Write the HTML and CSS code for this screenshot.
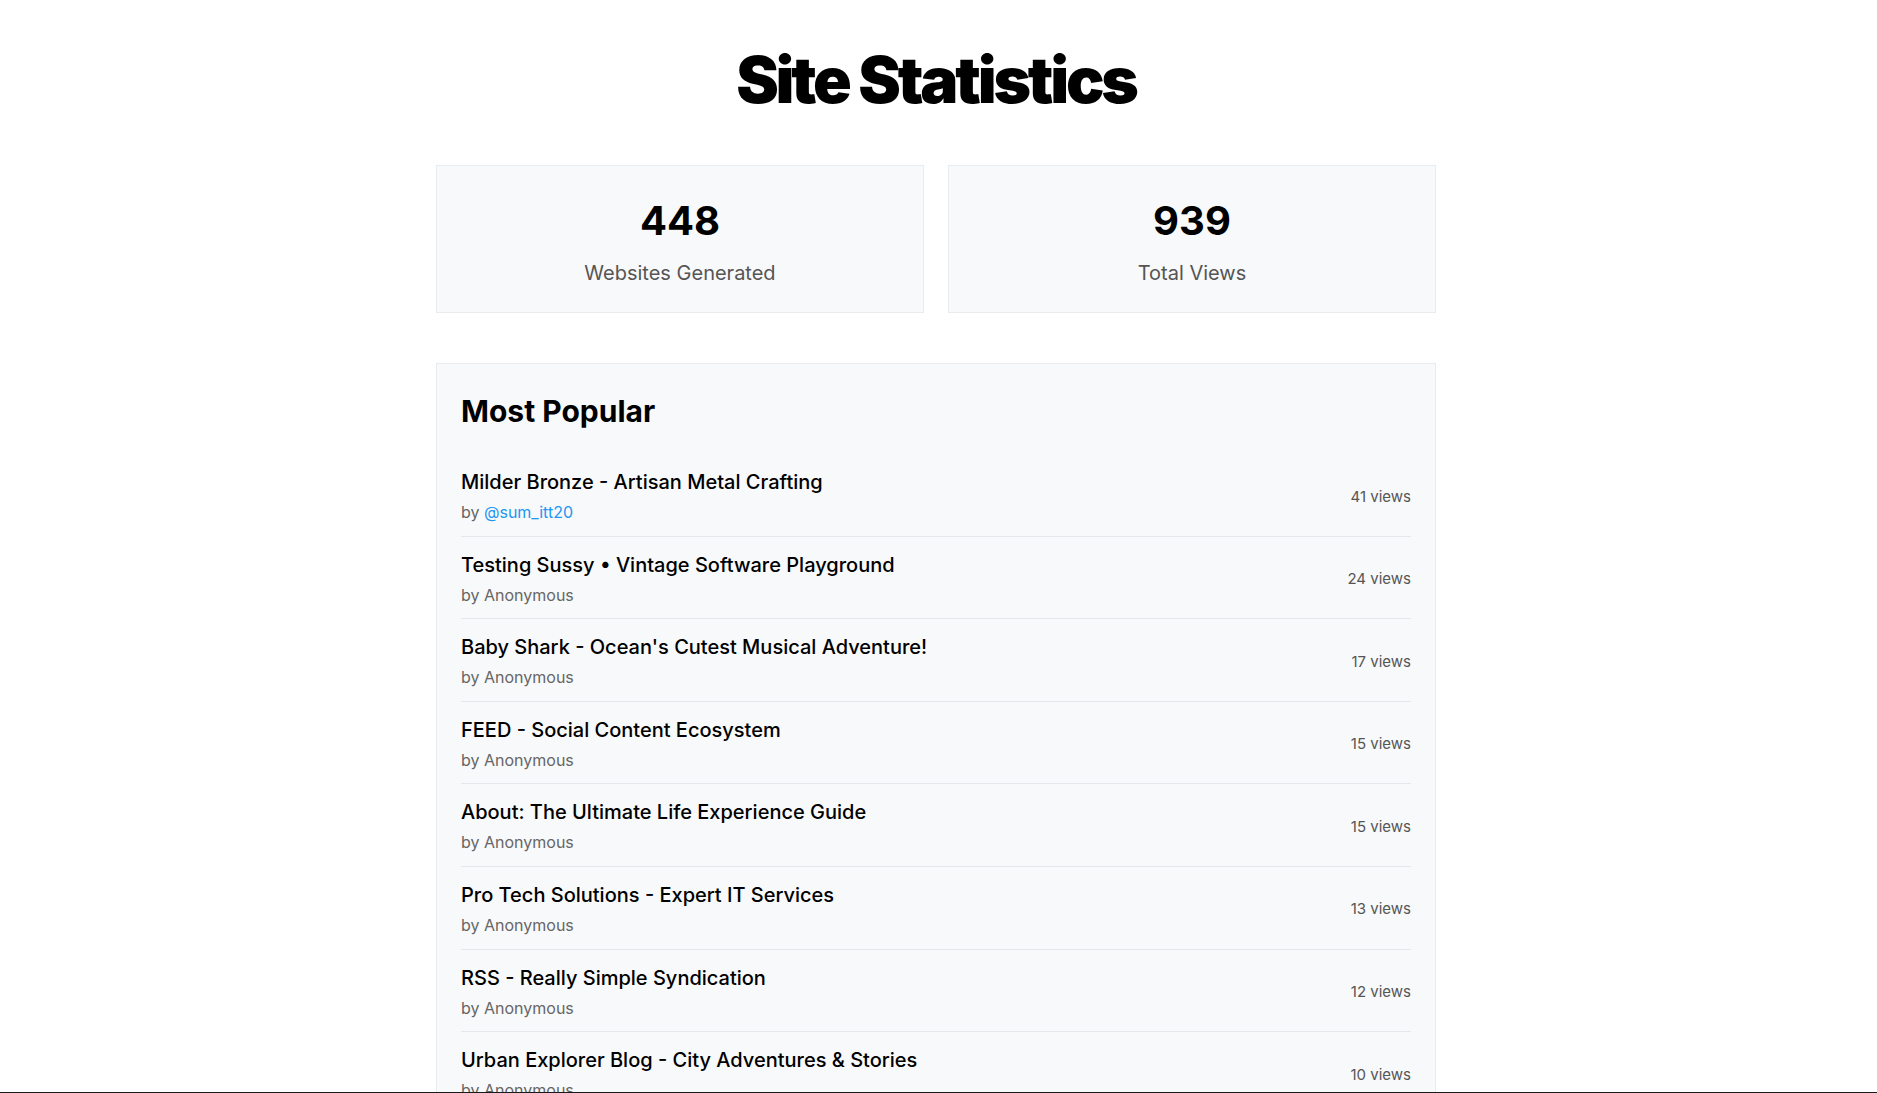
FILE: index.html
```html
<!DOCTYPE html>
<html lang="en">
<head>
<meta charset="utf-8">
<title>Site Statistics</title>
<link rel="stylesheet" href="styles.css">
</head>
<body>
<main class="page">
  <h1 class="page-title">Site Statistics</h1>

  <section class="stats">
    <div class="stat-card">
      <div class="stat-number">448</div>
      <div class="stat-label">Websites Generated</div>
    </div>
    <div class="stat-card">
      <div class="stat-number">939</div>
      <div class="stat-label">Total Views</div>
    </div>
  </section>

  <section class="popular">
    <h2 class="popular-title">Most Popular</h2>
    <ul class="site-list">
      <li class="site-row">
        <div class="site-info">
          <div class="site-name">Milder Bronze - Artisan Metal Crafting</div>
          <div class="site-author">by <a class="author-link" href="#">@sum_itt20</a></div>
        </div>
        <div class="site-views">41 views</div>
      </li>
      <li class="site-row">
        <div class="site-info">
          <div class="site-name">Testing Sussy • Vintage Software Playground</div>
          <div class="site-author">by Anonymous</div>
        </div>
        <div class="site-views">24 views</div>
      </li>
      <li class="site-row">
        <div class="site-info">
          <div class="site-name">Baby Shark - Ocean's Cutest Musical Adventure!</div>
          <div class="site-author">by Anonymous</div>
        </div>
        <div class="site-views">17 views</div>
      </li>
      <li class="site-row">
        <div class="site-info">
          <div class="site-name">FEED - Social Content Ecosystem</div>
          <div class="site-author">by Anonymous</div>
        </div>
        <div class="site-views">15 views</div>
      </li>
      <li class="site-row">
        <div class="site-info">
          <div class="site-name">About: The Ultimate Life Experience Guide</div>
          <div class="site-author">by Anonymous</div>
        </div>
        <div class="site-views">15 views</div>
      </li>
      <li class="site-row">
        <div class="site-info">
          <div class="site-name">Pro Tech Solutions - Expert IT Services</div>
          <div class="site-author">by Anonymous</div>
        </div>
        <div class="site-views">13 views</div>
      </li>
      <li class="site-row">
        <div class="site-info">
          <div class="site-name">RSS - Really Simple Syndication</div>
          <div class="site-author">by Anonymous</div>
        </div>
        <div class="site-views">12 views</div>
      </li>
      <li class="site-row">
        <div class="site-info">
          <div class="site-name">Urban Explorer Blog - City Adventures &amp; Stories</div>
          <div class="site-author">by Anonymous</div>
        </div>
        <div class="site-views">10 views</div>
      </li>
    </ul>
  </section>
</main>
<div class="bottom-edge"></div>
</body>
</html>
```

FILE: styles.css
```css
* {
  box-sizing: border-box;
}

body {
  margin: 0;
  padding: 0 5px 0 0;
  background: #ffffff;
  color: #000000;
  font-family: Inter, "Noto Sans", "Liberation Sans", sans-serif;
}

.page {
  max-width: 1000px;
  margin: 0 auto;
  padding-top: 41px;
}

.page-title {
  margin: 0 0 47px;
  text-align: center;
  font-size: 64px;
  font-weight: 900;
  letter-spacing: -0.05em;
  line-height: normal;
}

.stats {
  display: grid;
  grid-template-columns: 1fr 1fr;
  gap: 24px;
  margin-bottom: 50px;
}

.stat-card {
  background: #f8f9fa;
  border: 1px solid #e9ecef;
  padding: 30px 24px 27px;
  text-align: center;
}

.stat-number {
  font-size: 40px;
  font-weight: 700;
  line-height: normal;
  margin-bottom: 16px;
}

.stat-label {
  font-size: 20px;
  color: #555555;
  line-height: normal;
}

.popular {
  background: #f8f9fa;
  border: 1px solid #e9ecef;
  padding: 29px 24px 30px;
}

.popular-title {
  margin: 0 0 25px;
  font-size: 30px;
  font-weight: 700;
  line-height: normal;
}

.site-list {
  list-style: none;
  margin: 0;
  padding: 0;
}

.site-row {
  display: flex;
  align-items: center;
  justify-content: space-between;
  padding: 16px 0 13.6px;
  border-bottom: 1px solid #e5e7eb;
}

.site-row:last-child {
  border-bottom: none;
}

.site-name {
  font-size: 20px;
  font-weight: 500;
  line-height: normal;
  margin-bottom: 8px;
}

.site-author {
  font-size: 16px;
  color: #666666;
  line-height: normal;
}

.author-link {
  color: #2196f3;
  text-decoration: none;
}

.site-views {
  font-size: 15px;
  color: #555555;
  white-space: nowrap;
}

.bottom-edge {
  position: fixed;
  left: 0;
  right: 0;
  bottom: 0;
  height: 1px;
  background: #1a1a1a;
}
```
